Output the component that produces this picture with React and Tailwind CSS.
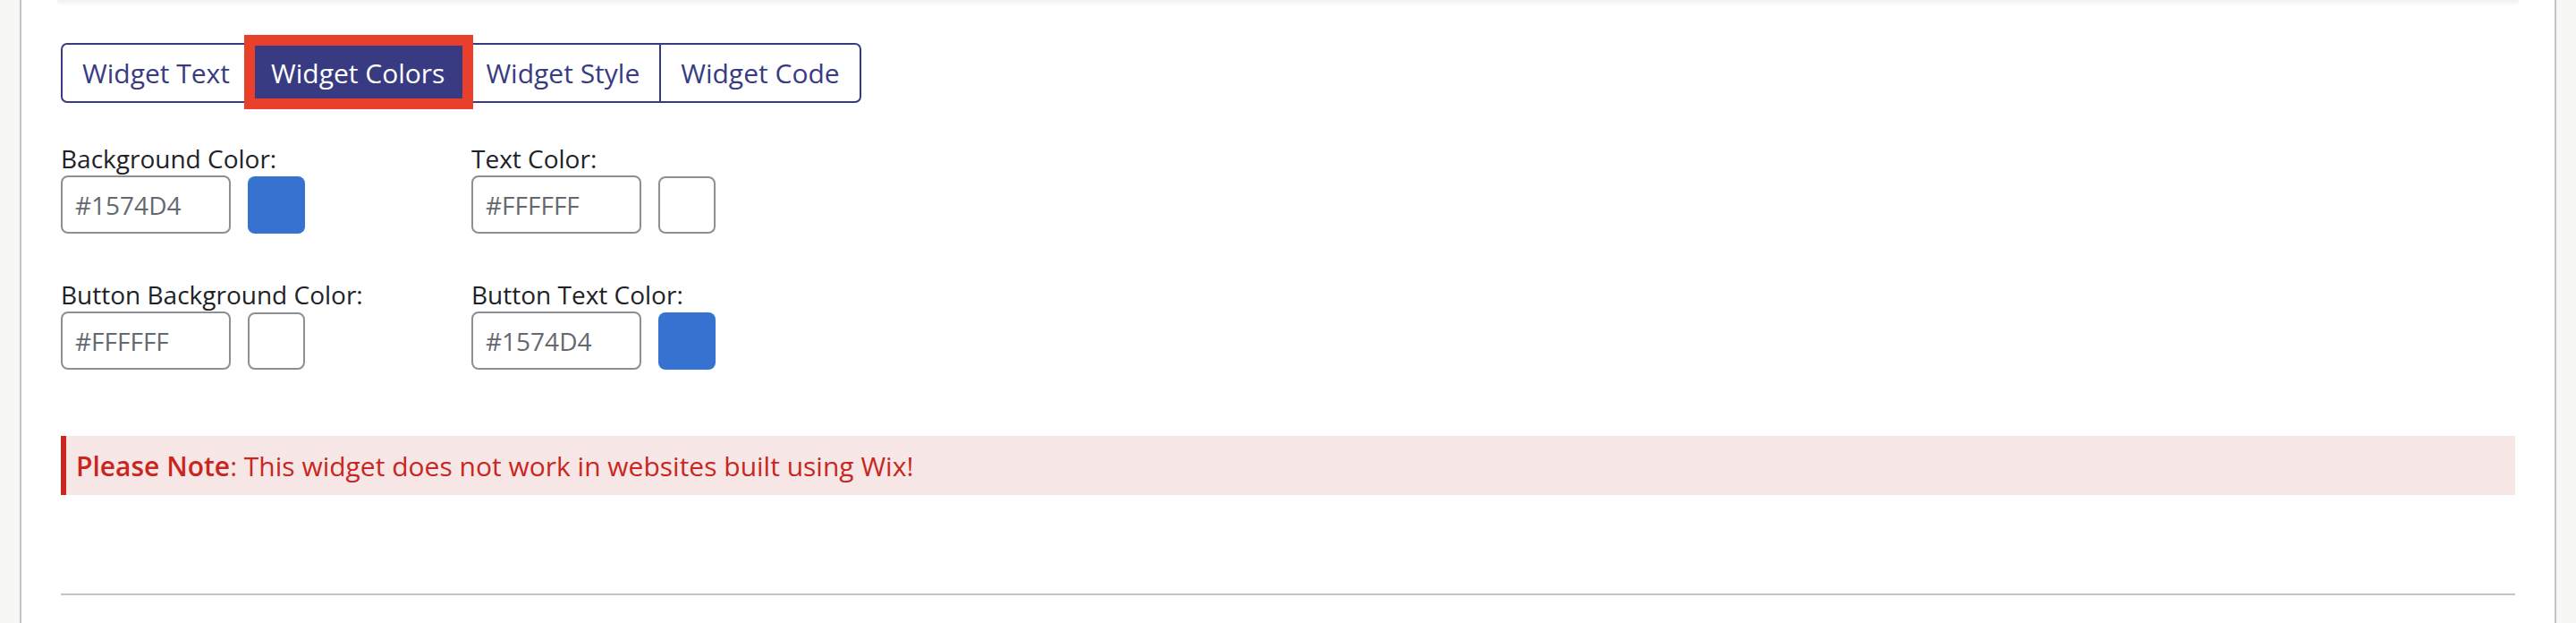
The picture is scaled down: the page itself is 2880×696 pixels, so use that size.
import React from "react";

const tabs = ["Widget Text", "Widget Colors", "Widget Style", "Widget Code"];

function ColorField({ label, value, swatch }) {
  return (
    <div className="flex flex-col">
      <label className="text-[28px] leading-[38px] text-[#1d2327]">{label}</label>
      <div className="flex items-center">
        <input
          readOnly
          value={value}
          className="w-[190px] h-[65px] border-2 border-[#8c8f94] rounded-[8px] px-[14px] text-[28px] text-[#646970] bg-white outline-none font-['Open_Sans',sans-serif]"
        />
        <div
          className={
            swatch === "blue"
              ? "ml-[19px] w-[64px] h-[64px] rounded-[8px] bg-[#3672cf]"
              : "ml-[19px] w-[64px] h-[64px] rounded-[8px] bg-white border-2 border-[#8c8f94]"
          }
        />
      </div>
    </div>
  );
}

export default function App() {
  return (
    <div className="w-[2880px] h-[696px] flex bg-[#f7f7f5] font-['Open_Sans',sans-serif] overflow-hidden">
      <div className="w-[22px] shrink-0 bg-[#f7f7f5]" />
      <div className="w-[2px] shrink-0 bg-[#c3c4c7]" />
      <main className="flex-1 bg-white relative">
        <div className="h-[7px] mx-[40px] bg-gradient-to-b from-[#f1f1f1] to-white rounded-b-[6px]" />
        <div className="px-[44px] pt-[41px]">
          <div className="relative inline-flex border-2 border-[#393b82] rounded-[7px] h-[67px]">
            {tabs.map((t, i) => (
              <button
                key={t}
                className={
                  (i === 1
                    ? "bg-[#393b82] text-white "
                    : "bg-transparent text-[#393b82] ") +
                  (i > 0 ? "border-l-2 border-[#393b82] " : "rounded-l-[5px] ") +
                  (i === 3 ? "rounded-r-[5px] " : "") +
                  "h-full px-[22px] text-[30px] leading-none"
                }
              >
                {t}
              </button>
            ))}
            <div className="absolute left-[203px] top-[-11px] w-[256px] h-[83px] border-[12px] border-[#e9402b] pointer-events-none" />
          </div>

          <div className="mt-[43px] grid grid-cols-[459px_459px] gap-y-[49px]">
            <ColorField label="Background Color:" value="#1574D4" swatch="blue" />
            <ColorField label="Text Color:" value="#FFFFFF" swatch="white" />
            <ColorField label="Button Background Color:" value="#FFFFFF" swatch="white" />
            <ColorField label="Button Text Color:" value="#1574D4" swatch="blue" />
          </div>

          <div className="mt-[74px] h-[66px] flex items-center bg-[#f6e6e6] border-l-[6px] border-[#c9271e] pl-[11px] text-[30px] text-[#c9271e]">
            <span>
              <span className="font-semibold">Please Note</span>: This widget does not work in websites built using Wix!
            </span>
          </div>

          <div className="mt-[110px] h-[2px] bg-[#c3c4c7]" />
        </div>
      </main>
      <div className="w-[2px] shrink-0 bg-[#c3c4c7]" />
      <div className="w-[22px] shrink-0 bg-[#f7f7f5]" />
    </div>
  );
}
